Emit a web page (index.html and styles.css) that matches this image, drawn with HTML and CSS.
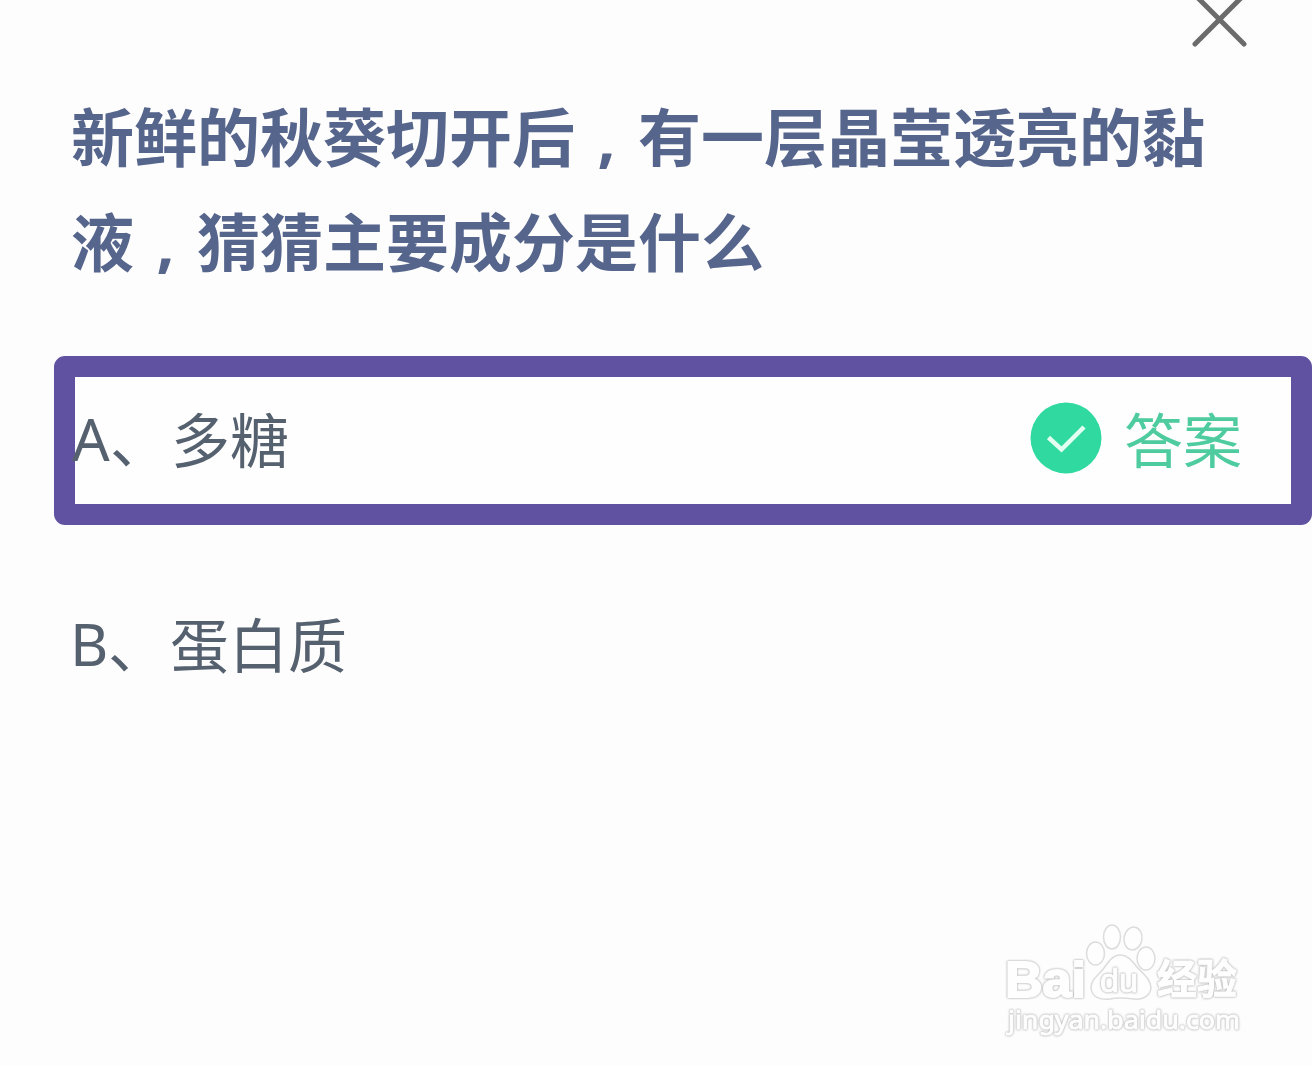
FILE: index.html
```
<!DOCTYPE html>
<html lang="zh-CN">
<head>
    <meta charset="UTF-8">
    <meta name="viewport" content="width=device-width, initial-scale=1.0">
    <title>答题</title>
    <link rel="stylesheet" href="styles.css">
</head>
<body>
    <div class="page">
        <!-- Close button -->
        <div class="top">
            <svg class="close" width="56" height="50" viewBox="0 0 56 50">
                <path d="M3 -5 L52 44 M52 -5 L3 44"/>
            </svg>
        </div>

        <!-- Question -->
        <h1 class="question">新鲜的秋葵切开后<span class="comma">,</span>有一层晶莹透亮的黏<br>液<span class="comma">,</span>猜猜主要成分是什么</h1>

        <!-- Options -->
        <div class="option correct">
            <div class="label"><span class="letter">A</span><span class="mark">、</span>多糖</div>
            <div class="answer">
                <svg class="check" width="72" height="72" viewBox="0 0 72 72">
                    <circle cx="36" cy="36" r="35.5"/>
                    <path d="M18.5 35.5 L31.5 47.5 L54 25"/>
                </svg>
                <span>答案</span>
            </div>
        </div>
        <div class="option">
            <div class="label"><span class="letter">B</span><span class="mark">、</span>蛋白质</div>
        </div>

        <!-- Watermark -->
        <div class="watermark">
            <svg width="250" height="125" viewBox="1000 920 250 125">
                <g class="shape">
                    <ellipse cx="1095.5" cy="953.5" rx="9" ry="11.5"/>
                    <ellipse cx="1112" cy="937" rx="8.5" ry="12"/>
                    <ellipse cx="1133" cy="938.5" rx="9" ry="11.5" transform="rotate(10 1133 938.5)"/>
                    <ellipse cx="1146" cy="958.5" rx="9" ry="11.5"/>
                    <path d="M1120 955 C1128 955 1132 961 1137 967 C1142 973 1151 979 1151 988 C1150 997 1141 1000 1134 999 C1126 998 1118 997 1110 999 C1101 1000 1092 998 1091 988 C1091 979 1099 975 1104 968 C1109 961 1113 955 1120 955 Z"/>
                </g>
                <text class="bai" x="1005" y="997" textLength="81" lengthAdjust="spacingAndGlyphs">Bai</text>
                <text class="du" x="1100" y="992" textLength="38" lengthAdjust="spacingAndGlyphs">du</text>
                <text class="jy" x="1157" y="994" textLength="80" lengthAdjust="spacingAndGlyphs">经验</text>
                <text class="url" x="1008" y="1029" textLength="232" lengthAdjust="spacingAndGlyphs">jingyan.baidu.com</text>
            </svg>
        </div>
    </div>
</body>
</html>
```

FILE: styles.css
```
* { box-sizing: border-box; }
body { margin: 0; background: #fdfdfd; font-family: "Noto Sans CJK SC", sans-serif; }
.page { height: 1065px; display: flex; flex-direction: column; overflow: hidden; }
.top { display: flex; justify-content: flex-end; height: 81px; padding-right: 64px; }
.close path { fill: none; stroke: #6b6b6b; stroke-width: 5; stroke-linecap: round; }
.question { margin: 0; padding-left: 71px; height: 275px; font-size: 63px; line-height: 105px; font-weight: 700; color: #56658c; white-space: nowrap; }
.comma { display: inline-block; width: 63px; text-align: center; font-family: "Open Sans", sans-serif; line-height: 1; }
.option { display: flex; align-items: center; justify-content: space-between; height: 169px; padding: 0 71px 9px 70px; font-size: 59px; line-height: 80px; color: #56616f; }
.option + .option { margin-top: 38px; }
.correct { margin-left: 54px; padding: 0 49px 6px 0; border: 21px solid #6152a1; border-radius: 11px; background: #fefefe; }
.label { display: flex; white-space: nowrap; }
.letter { width: 38px; font-family: "Noto Sans", sans-serif; }
.correct .letter { margin-left: -3px; }
.mark { width: 62px; }
.correct .mark { width: 61px; }
.answer { display: flex; align-items: center; gap: 22px; color: #4fcba0; }
.check circle { fill: #30d99f; }
.check path { fill: none; stroke: #e3fff2; stroke-width: 4.5; }
.watermark { display: flex; justify-content: flex-end; margin-top: auto; padding: 0 62px 20px 0; }
.watermark svg { fill: #fefefe; }
.shape { stroke: #dcdcdc; stroke-width: 1.5; }
.watermark text { stroke: #fefefe; stroke-width: 1; filter: drop-shadow(0 0 0.8px #b5b5b5) drop-shadow(0 0 0.6px #d0d0d0); }
.watermark .bai { font: 700 50px "Liberation Sans", sans-serif; stroke-width: 2; }
.du { font: 400 34px "Liberation Sans", sans-serif; }
.jy { font: 700 41px "Noto Sans CJK SC", sans-serif; }
.url { font: 400 26px/1 "Noto Sans", sans-serif; }
```
